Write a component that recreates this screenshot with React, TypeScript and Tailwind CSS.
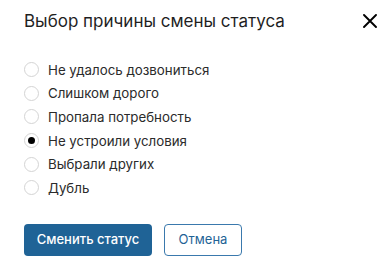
import { useState } from "react";

const reasons = [
  "Не удалось дозвониться",
  "Слишком дорого",
  "Пропала потребность",
  "Не устроили условия",
  "Выбрали других",
  "Дубль",
];

export default function App() {
  const [selected, setSelected] = useState(3);

  return (
    <div className="h-[263px] w-[392px] bg-white px-6 pt-[9px] font-['Inter',sans-serif] text-[#222]">
      <header className="flex items-center justify-between">
        <h1 className="text-[17px] leading-6 font-normal text-[#1f1f1f]">Выбор причины смены статуса</h1>
        <button className="mr-[-14px] flex h-6 w-6 items-center justify-center text-black" aria-label="Закрыть">
          <svg width="14" height="14" viewBox="0 0 14 14" fill="none">
            <path d="M1 1L13 13M13 1L1 13" stroke="currentColor" strokeWidth="1.9" strokeLinecap="round" />
          </svg>
        </button>
      </header>

      <ul className="mt-[25px] flex flex-col">
        {reasons.map((r, i) => (
          <li key={r}>
            <label className="flex h-[23.6px] cursor-pointer items-center gap-[9px]" onClick={() => setSelected(i)}>
              <span className="flex h-[15px] w-[15px] items-center justify-center rounded-full border border-[#d4d4d4] bg-white">
                {selected === i && <span className="h-[7px] w-[7px] rounded-full bg-black" />}
              </span>
              <span className="text-[13.3px] leading-4 text-[#2b2b2b]">{r}</span>
            </label>
          </li>
        ))}
      </ul>

      <div className="mt-[24px] flex gap-3">
        <button className="h-8 w-32 rounded-[4px] bg-[#1f6396] text-[13px] font-medium text-white">Сменить статус</button>
        <button className="h-8 w-[78px] rounded-[4px] border border-[#3a79ad] text-[13px] text-[#1f6396]">Отмена</button>
      </div>
    </div>
  );
}
